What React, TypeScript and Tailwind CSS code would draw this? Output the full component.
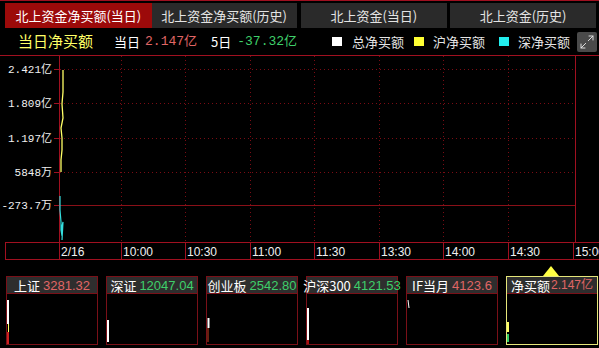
import { Maximize2 } from "lucide-react";

const CJK = "font-['Noto_Sans_CJK_SC','Liberation_Sans',sans-serif]";

const tabs = ["北上资金净买额(当日)", "北上资金净买额(历史)", "北上资金(当日)", "北上资金(历史)"];

const cards = [
  { name: "上证", value: "3281.32", color: "text-[#e06666]" },
  { name: "深证", value: "12047.04", color: "text-[#3fcf6a]" },
  { name: "创业板", value: "2542.80", color: "text-[#3fcf6a]" },
  { name: "沪深300", value: "4121.53", color: "text-[#3fcf6a]" },
  { name: "IF当月", value: "4123.6", color: "text-[#e06666]" },
  { name: "净买额", value: "2.147亿", color: "text-[#e06666]" },
];

const yLabels = [
  { y: 69, t: "2.421亿" },
  { y: 103, t: "1.809亿" },
  { y: 138, t: "1.197亿" },
  { y: 172, t: "5848万" },
  { y: 205, t: "-273.7万" },
];

const times = [
  { x: 59, t: "2/16" },
  { x: 121, t: "10:00" },
  { x: 185, t: "10:30" },
  { x: 250, t: "11:00" },
  { x: 314, t: "11:30" },
  { x: 379, t: "13:30" },
  { x: 443, t: "14:00" },
  { x: 508, t: "14:30" },
  { x: 573, t: "15:00" },
];

function Chart() {
  // chart svg spans page y 55..259, so offset = 55
  const o = 55;
  return (
    <svg width={599} height={205} className="block">
      {/* dotted grid */}
      {yLabels.slice(0, 4).map((l) => (
        <line key={l.y} x1={60} x2={575} y1={l.y - o + 0.5} y2={l.y - o + 0.5} stroke="#7a0c14" strokeDasharray="1 3" />
      ))}
      {times.slice(1, 8).map((t) => (
        <line key={t.x} x1={t.x + 0.5} x2={t.x + 0.5} y1={1} y2={242 - o} stroke="#7a0c14" strokeDasharray="1 3" />
      ))}
      <line x1={60} x2={575} y1={205 - o + 0.5} y2={205 - o + 0.5} stroke="#8a1018" />
      {/* frame */}
      <line x1={0} x2={599} y1={0.5} y2={0.5} stroke="#a01020" />
      <line x1={59.5} x2={59.5} y1={0} y2={259 - o} stroke="#a01020" />
      <line x1={575.5} x2={575.5} y1={0} y2={242 - o} stroke="#a01020" />
      <line x1={5} x2={599} y1={242 - o + 0.5} y2={242 - o + 0.5} stroke="#a01020" />
      <line x1={5} x2={599} y1={259 - o + 0.5} y2={259 - o + 0.5} stroke="#a01020" />
      <line x1={5.5} x2={5.5} y1={242 - o} y2={259 - o} stroke="#a01020" />
      {times.slice(1).map((t) => (
        <line key={t.x} x1={t.x + 0.5} x2={t.x + 0.5} y1={242 - o} y2={259 - o} stroke="#a01020" />
      ))}
      {/* y axis */}
      {yLabels.map((l) => (
        <g key={l.t}>
          <line x1={54} x2={59} y1={l.y - o + 0.5} y2={l.y - o + 0.5} stroke="#a01020" />
          <text x={52} y={l.y - o + 4} textAnchor="end" fill="#f0f0f0" fontSize={11} fontFamily="'Liberation Mono','Noto Sans CJK SC',monospace">
            {l.t}
          </text>
        </g>
      ))}
      {times.map((t) => (
        <text key={t.t} x={t.x + 2} y={256 - o} fill="#f0f0f0" fontSize={12} fontFamily="'Liberation Sans',sans-serif">
          {t.t}
        </text>
      ))}
      {/* series */}
      <polyline
        points={`61,${172 - o} 61,${160 - o} 62,${150 - o} 62,${138 - o} 61,${128 - o} 63,${118 - o} 62,${104 - o} 63,${92 - o} 63,${80 - o} 63,${70 - o}`}
        fill="none"
        stroke="#ffff66"
        strokeWidth={1.3}
      />
      <polyline
        points={`60,${196 - o} 60,${210 - o} 61,${222 - o} 61,${230 - o} 62,${236 - o} 62,${226 - o} 63,${222 - o} 62,${240 - o}`}
        fill="none"
        stroke="#33dddd"
        strokeWidth={1.2}
      />
    </svg>
  );
}

function Spark({ i }: { i: number }) {
  return (
    <svg width={10} height={50} className="block">
      {i === 0 && (
        <>
          <line x1={1} x2={1} y1={6} y2={30} stroke="#fff" strokeWidth={2} />
          <line x1={1.5} x2={1.5} y1={30} y2={38} stroke="#ffff66" />
          <line x1={1} x2={1} y1={38} y2={50} stroke="#cc2020" strokeWidth={2} />
        </>
      )}
      {i === 1 && <line x1={1} x2={1} y1={26} y2={48} stroke="#fff" strokeWidth={2} />}
      {i === 2 && (
        <>
          <line x1={1.5} x2={1.5} y1={24} y2={34} stroke="#fff" strokeWidth={2} />
          <line x1={1} x2={1} y1={34} y2={48} stroke="#cc4020" />
        </>
      )}
      {i === 3 && (
        <>
          <line x1={1} x2={1} y1={14} y2={46} stroke="#fff" strokeWidth={2} />
          <line x1={1} x2={1} y1={46} y2={50} stroke="#aa1010" strokeWidth={2} />
        </>
      )}
      {i === 4 && <line x1={1} x2={2} y1={6} y2={14} stroke="#fff" />}
      {i === 5 && (
        <>
          <line x1={1} x2={1} y1={28} y2={38} stroke="#ffff66" strokeWidth={2} />
          <line x1={1} x2={1} y1={40} y2={48} stroke="#33cc66" strokeWidth={2} />
        </>
      )}
    </svg>
  );
}

export default function App() {
  return (
    <div className={`w-[599px] h-[348px] bg-black relative overflow-hidden ${CJK}`}>
      {/* Tabs */}
      <div className="h-[28px] border-t border-[#a01020] flex items-end pl-[5px] pr-[3px]">
        {tabs.map((t, i) => (
          <div
            key={t}
            className={`h-[25px] flex items-center justify-center text-[13px] ${
              i === 0 ? "w-[147px] bg-[#9c0a0a] text-white" : "bg-[#2a2a2a] text-[#e4e4e4]"
            } ${i === 1 ? "w-[145px]" : ""} ${i === 2 ? "w-[147px] ml-[4px]" : ""} ${i === 3 ? "w-[146px] ml-[3px]" : ""}`}
          >
            {t}
          </div>
        ))}
      </div>

      {/* Summary row */}
      <div className="h-[27px] flex items-center pl-[18px] pr-[2px]">
        <span className="text-[15px] text-[#ffff66]">当日净买额</span>
        <span className="ml-[21px] text-[13px] text-white">当日</span>
        <span className="ml-[5px] text-[13px] text-[#e06666] font-['Liberation_Mono','Noto_Sans_CJK_SC',monospace]">2.147亿</span>
        <span className="ml-[14px] text-[13px] text-white">5日</span>
        <span className="ml-[6px] text-[13px] text-[#3fcf6a] font-['Liberation_Mono','Noto_Sans_CJK_SC',monospace]">-37.32亿</span>
        <div className="ml-auto flex items-center text-[13px] text-[#e4e4e4]">
          <span className="w-[10px] h-[9px] bg-white" />
          <span className="ml-[10px]">总净买额</span>
          <span className="ml-[10px] w-[10px] h-[9px] bg-[#ffff33]" />
          <span className="ml-[9px]">沪净买额</span>
          <span className="ml-[14px] w-[10px] h-[9px] bg-[#22eeee]" />
          <span className="ml-[9px]">深净买额</span>
          <div className="ml-[7px] w-[20px] h-[20px] bg-[#4a4a4a] rounded-[2px] flex items-center justify-center">
            <Maximize2 size={16} strokeWidth={1.4} color="#e8e8e8" />
          </div>
        </div>
      </div>

      <Chart />

      {/* Cards */}
      <div className="mt-[16px] flex gap-[8px] pl-[6px]">
        {cards.map((c, i) => (
          <div
            key={c.name}
            className={`w-[92px] h-[69px] border ${i === 5 ? "border-[#e6e67a]" : "border-[#7a1018]"} flex flex-col`}
          >
            <div className="h-[18px] bg-[#2e2e2e] border-b border-[#7a1018] flex items-center justify-center gap-[3px] text-[13px] leading-none whitespace-nowrap">
              <span className="text-white">{c.name}</span>
              <span className={`${c.color} font-['Liberation_Sans','Noto_Sans_CJK_SC',sans-serif] ${i === 5 ? "text-[12px] -ml-[2px]" : ""}`}>
                {c.value}
              </span>
            </div>
            <div className="flex-1 flex items-end">
              <Spark i={i} />
            </div>
          </div>
        ))}
      </div>

      {/* selector triangle */}
      <div className="absolute left-[543px] top-[266px] w-0 h-0 border-l-[8px] border-r-[8px] border-b-[10px] border-l-transparent border-r-transparent border-b-[#ffff44]" />
    </div>
  );
}
